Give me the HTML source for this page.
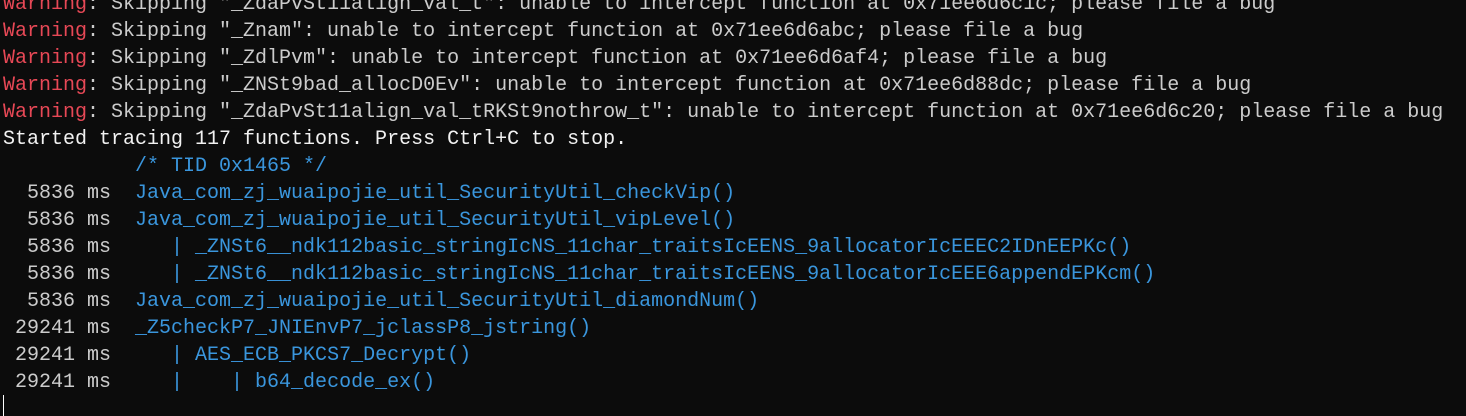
<!DOCTYPE html>
<html><head><style>
html,body{margin:0;padding:0;background:#0c0c0c;width:1466px;height:416px;overflow:hidden}
pre{margin:0;position:absolute;left:3px;top:-9px;font-family:"Liberation Mono","DejaVu Sans Mono",monospace;font-size:20px;line-height:27px;color:#cccccc;letter-spacing:0}
.r{color:#e74856}.w{color:#f2f2f2}.b{color:#3a96dd}
.cur{position:absolute;left:3px;top:395px;width:1px;height:21px;background:#ffffff}
</style></head><body>
<pre><span class="r">Warning</span>: Skipping "_ZdaPvSt11align_val_t": unable to intercept function at 0x71ee6d6c1c; please file a bug
<span class="r">Warning</span>: Skipping "_Znam": unable to intercept function at 0x71ee6d6abc; please file a bug
<span class="r">Warning</span>: Skipping "_ZdlPvm": unable to intercept function at 0x71ee6d6af4; please file a bug
<span class="r">Warning</span>: Skipping "_ZNSt9bad_allocD0Ev": unable to intercept function at 0x71ee6d88dc; please file a bug
<span class="r">Warning</span>: Skipping "_ZdaPvSt11align_val_tRKSt9nothrow_t": unable to intercept function at 0x71ee6d6c20; please file a bug
<span class="w">Started tracing 117 functions. Press Ctrl+C to stop.</span>
           <span class="b">/* TID 0x1465 */</span>
  5836 ms  <span class="b">Java_com_zj_wuaipojie_util_SecurityUtil_checkVip()</span>
  5836 ms  <span class="b">Java_com_zj_wuaipojie_util_SecurityUtil_vipLevel()</span>
  5836 ms  <span class="b">   | _ZNSt6__ndk112basic_stringIcNS_11char_traitsIcEENS_9allocatorIcEEEC2IDnEEPKc()</span>
  5836 ms  <span class="b">   | _ZNSt6__ndk112basic_stringIcNS_11char_traitsIcEENS_9allocatorIcEEE6appendEPKcm()</span>
  5836 ms  <span class="b">Java_com_zj_wuaipojie_util_SecurityUtil_diamondNum()</span>
 29241 ms  <span class="b">_Z5checkP7_JNIEnvP7_jclassP8_jstring()</span>
 29241 ms  <span class="b">   | AES_ECB_PKCS7_Decrypt()</span>
 29241 ms  <span class="b">   |    | b64_decode_ex()</span>
</pre>
<div class="cur"></div>
</body></html>
